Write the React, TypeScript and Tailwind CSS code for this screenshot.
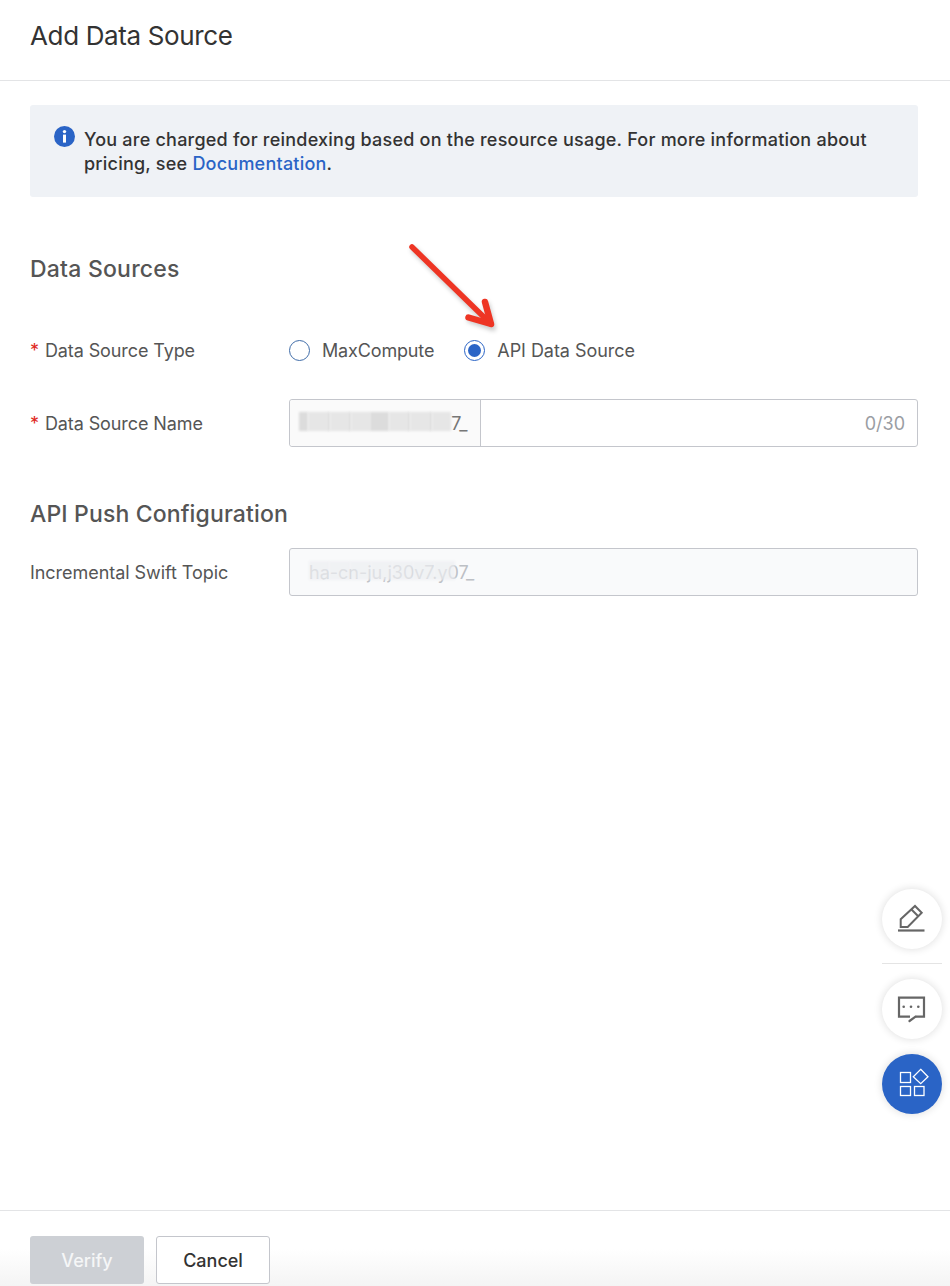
import React from "react";

function Arrow() {
  return (
    <svg className="absolute left-[400px] top-[236px] pointer-events-none" width="104" height="100" viewBox="400 236 104 100" fill="none">
      <g stroke="#000" strokeOpacity="0.2" strokeWidth="6" strokeLinecap="round" strokeLinejoin="round" transform="translate(2 3)" style={{ filter: "blur(2px)" }}>
        <path d="M412 247 L491 325 M485 302 L491 325 L468 317" />
      </g>
      <path d="M412 247 L491 324" stroke="#ee3524" strokeWidth="5.5" strokeLinecap="round" />
      <path d="M485 302 L491 324 L468.5 317.5" stroke="#ee3524" strokeWidth="6.5" strokeLinecap="round" strokeLinejoin="round" />
    </svg>
  );
}

function Blocks({ blocks, dim }: { blocks: number[]; dim?: boolean }) {
  return (
    <div className="absolute left-0 top-[1px] flex h-[19px]">
      {blocks.map((w, i) => (
        <div
          key={i}
          className={`blur-[1px] ${dim ? "bg-[#eceef1]/70" : i % 2 ? "bg-[#e6e6e6]" : "bg-[#dcdcdc]"}`}
          style={{ width: w }}
        />
      ))}
    </div>
  );
}

export default function App() {
  return (
    <div className="relative flex h-[1286px] w-[950px] flex-col overflow-hidden bg-white font-['Inter','Liberation_Sans',sans-serif] text-[#555]">
      <header className="flex h-[81px] shrink-0 items-center border-b border-[#e3e4e6] px-[30px] pb-[9px]">
        <h1 className="text-[26px] leading-[34px] font-normal text-[#333] tracking-[-0.36px]">Add Data Source</h1>
      </header>

      <main className="flex-1 px-[30px] pt-[24px]">
        <div className="flex h-[92px] w-[888px] gap-[9px] rounded-[3px] bg-[#eff2f6] pl-[24px] pr-[30px] pt-[23px]">
          <svg className="mt-[-2px] shrink-0" width="21" height="21" viewBox="0 0 21 21">
            <circle cx="10.5" cy="10.5" r="10.5" fill="#2a64c6" />
            <circle cx="10.5" cy="5.6" r="1.7" fill="#fff" />
            <rect x="9" y="8.6" width="3" height="8" fill="#fff" />
          </svg>
          <p className="text-[18px] leading-[24px] font-medium text-[#333] tracking-[0.225px]">
            You are charged for reindexing based on the resource usage. For more information about pricing, see{" "}
            <a className="text-[#2a64c6]">Documentation</a>.
          </p>
        </div>

        <h2 className="mt-[56px] text-[23px] leading-[32px] font-medium text-[#555] tracking-[0.22px]">Data Sources</h2>

        <div className="mt-[41px] flex h-[48px] items-center">
          <label className="w-[259px] text-[18px] tracking-[-0.1px] text-[#555]">
            <span className="mr-[6px] text-[#e0281c]">*</span>Data Source Type
          </label>
          <div className="flex items-center">
            <span className="h-[21px] w-[21px] rounded-full border border-[#3f6ca8] bg-white" />
            <span className="ml-[12px] text-[18px] tracking-[-0.15px]">MaxCompute</span>
            <span className="ml-[30px] flex h-[21px] w-[21px] items-center justify-center rounded-full border border-[#2a64c6]">
              <span className="h-[13px] w-[13px] rounded-full bg-[#2a64c6]" />
            </span>
            <span className="ml-[12px] text-[18px] tracking-[-0.05px]">API Data Source</span>
          </div>
        </div>

        <div className="mt-[25px] flex h-[48px] items-center">
          <label className="w-[259px] text-[18px] tracking-[-0.1px] text-[#555]">
            <span className="mr-[6px] text-[#e0281c]">*</span>Data Source Name
          </label>
          <div className="flex h-[48px] w-[629px] rounded-[3px] border border-[#c4c6cc]">
            <div className="flex w-[191px] items-center overflow-hidden rounded-l-[3px] border-r border-[#c4c6cc] bg-[#fafafa] pl-[9px]">
              <div className="relative flex h-[24px] w-full items-center justify-end pr-[12px]">
                <Blocks blocks={[9, 19, 3, 18, 3, 19, 19, 18, 3, 19, 3, 19]} />
                <span className="relative text-[18px] tracking-[0.6px] text-[#777]">7_</span>
              </div>
            </div>
            <div className="flex flex-1 items-center justify-end pr-[12px] text-[18px] text-[#9a9da3]">0/30</div>
          </div>
        </div>

        <h2 className="mt-[51px] text-[23px] leading-[32px] font-medium text-[#555] tracking-[0.14px]">API Push Configuration</h2>

        <div className="mt-[18px] flex h-[48px] items-center">
          <label className="w-[259px] text-[18px] tracking-[-0.05px] text-[#555]">Incremental Swift Topic</label>
          <div className="flex h-[48px] w-[629px] items-center rounded-[3px] border border-[#c4c6cc] bg-[#f9fafb] pl-[19px]">
            <div className="relative flex h-[24px] w-full items-center">
              <span className="text-[18px] text-[#bdc0c5]">ha-cn-ju,j30v7.y07_</span>
              <Blocks blocks={[20, 21, 21, 21, 21, 21, 21]} dim />
            </div>
          </div>
        </div>
      </main>

      <footer className="flex h-[76px] shrink-0 gap-[12px] border-t border-[#e3e4e6] bg-gradient-to-b from-white from-50% to-[#f4f4f4] px-[30px] pt-[25px]">
        <button className="h-[48px] w-[114px] rounded-[3px] bg-[#cdd0d5] text-[18px] font-medium text-[#f5f6f7]">Verify</button>
        <button className="h-[48px] w-[114px] rounded-[3px] border border-[#c4c6cc] bg-white text-[18px] font-medium text-[#333]">Cancel</button>
      </footer>

      <Arrow />

      <div className="absolute left-[882px] top-[889px] flex w-[60px] flex-col items-center">
        <button className="flex h-[60px] w-[60px] items-center justify-center rounded-full bg-white shadow-[0_0_8px_rgba(0,0,0,0.14)]">
          <svg width="60" height="60" viewBox="882 889 60 60" fill="none" stroke="#666" strokeWidth="2">
            <path d="M900.7 927 V919.3 L915 906 L921.7 912.7 L907.7 927 Z" strokeLinejoin="miter" />
            <path d="M911.5 909.5 L918.2 916.3" />
            <path d="M898 930.5 H924.5" strokeWidth="2.2" />
          </svg>
        </button>
        <div className="mt-[14px] h-px w-[60px] bg-[#e4e4e4]" />
        <button className="mt-[15px] flex h-[60px] w-[60px] items-center justify-center rounded-full bg-white shadow-[0_0_8px_rgba(0,0,0,0.14)]">
          <svg width="60" height="60" viewBox="882 979 60 60" fill="none" stroke="#666" strokeWidth="2.2">
            <path d="M910 1016.7 H899 V997.7 H924 V1016.7 H915.5" />
            <path d="M915.5 1016.7 L909.5 1021" strokeLinecap="round" />
            <circle cx="903.7" cy="1006.7" r="1.3" fill="#666" stroke="none" />
            <circle cx="911" cy="1006.7" r="1.3" fill="#666" stroke="none" />
            <circle cx="918.3" cy="1006.7" r="1.3" fill="#666" stroke="none" />
          </svg>
        </button>
        <button className="mt-[15px] flex h-[60px] w-[60px] items-center justify-center rounded-full bg-[#2a64c6] shadow-[0_0_8px_rgba(0,0,0,0.14)]">
          <svg width="60" height="60" viewBox="882 1054 60 60" fill="none" stroke="#fff" strokeWidth="1.3">
            <rect x="900.5" y="1072.5" width="10" height="10" />
            <rect x="900.5" y="1086.5" width="10" height="9" />
            <rect x="914.5" y="1086.5" width="9.5" height="9" />
            <path d="M920.7 1069.3 L928 1076.7 L920.7 1083.7 L913.3 1076.7 Z" />
          </svg>
        </button>
      </div>
    </div>
  );
}
